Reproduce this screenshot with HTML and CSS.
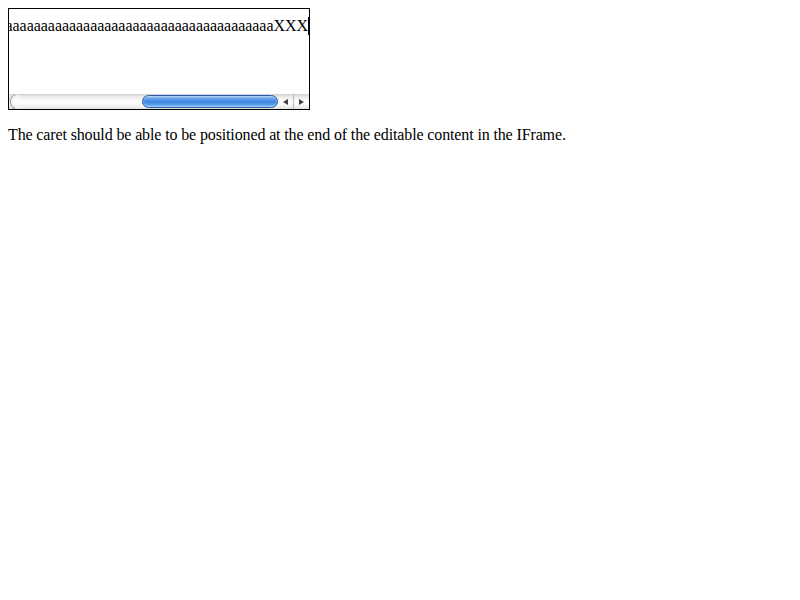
FILE: index.html
```html
<!DOCTYPE html>
<html>
<head>
<meta charset="utf-8">
<link rel="stylesheet" href="styles.css">
</head>
<body>
<div class="frame">
  <div class="viewport">
    <div class="line"><span class="text">aaaaaaaaaaaaaaaaaaaaaaaaaaaaaaaaaaaaaaaaaaaaaaaaXXX</span><span class="caret"></span></div>
  </div>
  <div class="hscroll">
    <div class="track">
      <div class="track-cap"></div>
      <div class="thumb-space"></div>
      <div class="thumb"></div>
    </div>
    <div class="btn btn-left"><span class="tri tri-left"></span></div>
    <div class="btn btn-right"><span class="tri tri-right"></span></div>
  </div>
</div>
<p class="note">The caret should be able to be positioned at the end of the editable content in the IFrame.</p>
</body>
</html>
```

FILE: styles.css
```css
html, body {
  margin: 0;
  padding: 0;
  background: #fff;
}
body {
  margin: 8px;
  font-family: "Liberation Serif", "Times New Roman", serif;
  font-size: 16px;
  color: #000;
}
.frame {
  width: 300px;
  height: 100px;
  border: 1px solid #000;
  display: flex;
  flex-direction: column;
}
.viewport {
  flex: 1;
  overflow: hidden;
  padding-top: 8px;
  display: flex;
  justify-content: flex-end;
}
.line {
  display: flex;
  align-items: flex-start;
  white-space: nowrap;
  flex-shrink: 0;
}
.text {
  line-height: 18px;
  letter-spacing: -0.05px;
}
.caret {
  width: 1px;
  height: 18px;
  background: #000;
}
.hscroll {
  height: 15px;
  display: flex;
  background: linear-gradient(#cfcfcf 0px, #e6e6e6 2px, #f4f4f4 5px, #ffffff 8px, #f2f2f2 12px, #e2e2e2 15px);
}
.track {
  flex: 1;
  display: flex;
  align-items: center;
}
.track-cap {
  width: 6px;
  height: 15px;
  background: linear-gradient(90deg, #ececec, #d0d0d0 60%, #b0b0b0);
  position: relative;
}
.track-cap::after {
  content: "";
  position: absolute;
  right: -6px;
  top: 1px;
  width: 10px;
  height: 13px;
  border-radius: 7px 0 0 7px;
  border-left: 1px solid #8e8e8e;
  background: linear-gradient(#eeeeee, #ffffff 50%, #f1f1f1);
}
.thumb-space {
  flex: 1;
}
.thumb {
  width: 134px;
  height: 11px;
  border: 1px solid #2a5aa8;
  border-radius: 7px;
  background: linear-gradient(#a6cdf6 0px, #5f9fec 3px, #3f86e4 6px, #5ea6f1 9px, #95cbfb 11px);
  box-shadow: inset 0 0 0 1px rgba(255,255,255,0.2);
}
.btn {
  width: 15px;
  height: 15px;
  display: flex;
  align-items: center;
  justify-content: center;
}
.btn-right {
  border-left: 1px solid #bdbdbd;
}
.tri {
  width: 0;
  height: 0;
  border-top: 3.5px solid transparent;
  border-bottom: 3.5px solid transparent;
}
.tri-left {
  border-right: 5px solid #404040;
}
.tri-right {
  border-left: 5px solid #404040;
}
.note {
  margin: 16px 0;
  line-height: 18px;
  letter-spacing: -0.13px;
}
```
